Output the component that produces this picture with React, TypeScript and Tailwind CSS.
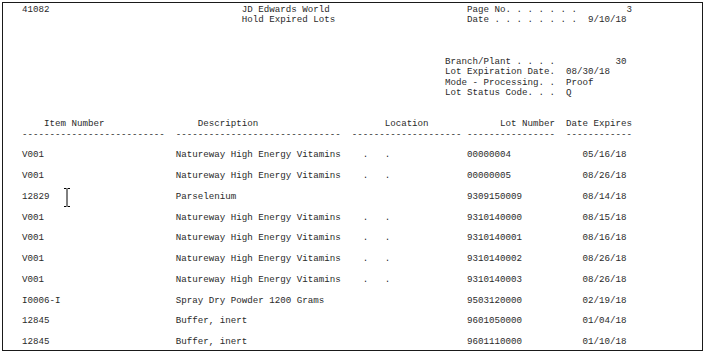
import React from 'react'

type Seg = [number, string]

// build one fixed-width report line from [column, text] pieces
function line(segs: Seg[]) {
  let s = ''
  for (const [col, text] of segs) {
    s = s.padEnd(col, ' ') + text
  }
  return s
}

const rows = [
  { item: 'V001', desc: 'Natureway High Energy Vitamins', loc: true, lot: '00000004', date: '05/16/18' },
  { item: 'V001', desc: 'Natureway High Energy Vitamins', loc: true, lot: '00000005', date: '08/26/18' },
  { item: '12829', desc: 'Parselenium', loc: false, lot: '9309150009', date: '08/14/18' },
  { item: 'V001', desc: 'Natureway High Energy Vitamins', loc: true, lot: '9310140000', date: '08/15/18' },
  { item: 'V001', desc: 'Natureway High Energy Vitamins', loc: true, lot: '9310140001', date: '08/16/18' },
  { item: 'V001', desc: 'Natureway High Energy Vitamins', loc: true, lot: '9310140002', date: '08/26/18' },
  { item: 'V001', desc: 'Natureway High Energy Vitamins', loc: true, lot: '9310140003', date: '08/26/18' },
  { item: 'I0006-I', desc: 'Spray Dry Powder 1200 Grams', loc: false, lot: '9503120000', date: '02/19/18' },
  { item: '12845', desc: 'Buffer, inert', loc: false, lot: '9601050000', date: '01/04/18' },
  { item: '12845', desc: 'Buffer, inert', loc: false, lot: '9601110000', date: '01/10/18' },
]

const header: string[] = [
  line([[0, '41082'], [40, 'JD Edwards World'], [81, 'Page No. . . . . . .'], [110, '3']]),
  line([[40, 'Hold Expired Lots'], [81, 'Date . . . . . . . .'], [103, '9/10/18']]),
  '',
  '',
  '',
  line([[77, 'Branch/Plant . . . .'], [108, '30']]),
  line([[77, 'Lot Expiration Date.'], [99, '08/30/18']]),
  line([[77, 'Mode - Processing. .'], [99, 'Proof']]),
  line([[77, 'Lot Status Code. . .'], [99, 'Q']]),
  '',
  '',
  line([[4, 'Item Number'], [32, 'Description'], [66, 'Location'], [87, 'Lot Number'], [99, 'Date Expires']]),
  line([
    [0, '-'.repeat(26)],
    [28, '-'.repeat(30)],
    [60, '-'.repeat(20)],
    [81, '-'.repeat(16)],
    [99, '-'.repeat(12)],
  ]),
]

export default function App() {
  const lines: string[] = [...header]
  rows.forEach((r) => {
    lines.push('')
    const segs: Seg[] = [[0, r.item], [28, r.desc]]
    if (r.loc) {
      segs.push([62, '.'], [66, '.'])
    }
    segs.push([81, r.lot], [102, r.date])
    lines.push(line(segs))
  })

  return (
    <div className="w-[705px] h-[353px] bg-white overflow-hidden">
      <div className="relative ml-[2px] mt-[2px] w-[701px] h-[349px] border border-[#1a1a1a] overflow-hidden">
        {/* report text */}
        <div className="pl-[19px] pt-[2px] whitespace-pre font-['Courier_New','Liberation_Mono',monospace] text-[9.17px] leading-[10.375px] text-[#2a2a2a]">
          {lines.map((l, i) => (
            <div key={i}>{l || ' '}</div>
          ))}
        </div>

        {/* text cursor */}
        <svg className="absolute left-[60px] top-[185px]" width="8" height="19" viewBox="0 0 8 19">
          <path d="M1 0.5h2.5M4.5 0.5H7M4 1v17M1 18.5h2.5M4.5 18.5H7" stroke="#000" strokeWidth="1" fill="none" />
        </svg>
      </div>
    </div>
  )
}
